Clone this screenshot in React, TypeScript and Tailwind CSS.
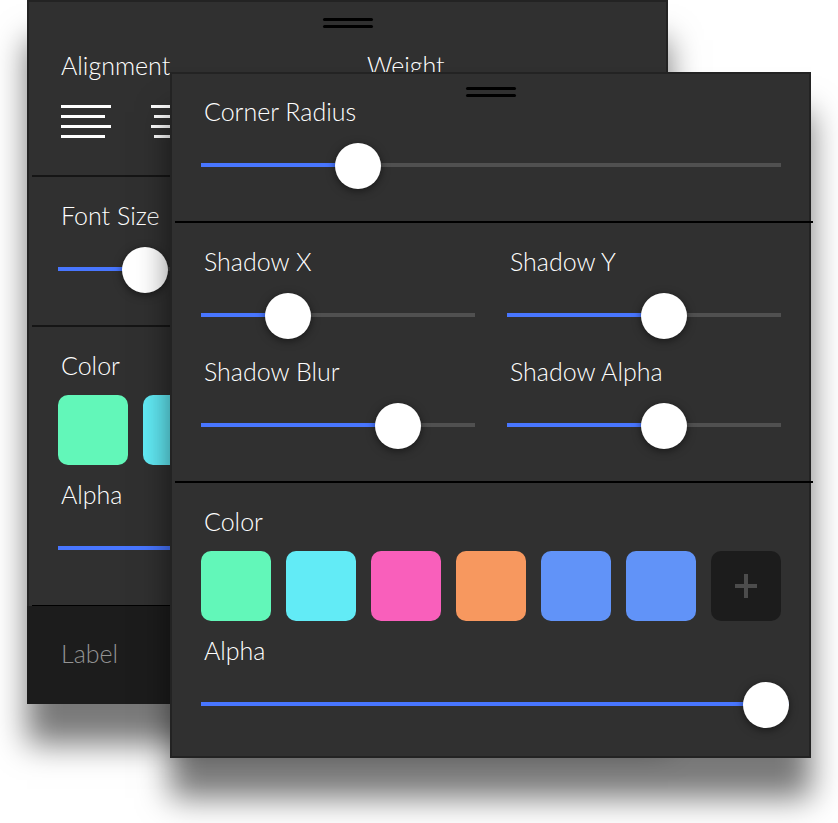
import { useId, useState } from "react";
import type { CSSProperties, ReactNode } from "react";

const label = "block pb-[2px] pl-[3px] text-[25px] leading-[26px] font-light text-white";

function Handle() {
  return (
    <div className="mx-auto flex w-[50px] flex-col gap-1">
      <div className="h-[3px] rounded-full bg-black" />
      <div className="h-[3px] rounded-full bg-black" />
    </div>
  );
}

function Divider({ className }: { className: string }) {
  return <hr className={`ml-[3px] border-0 ${className}`} />;
}

function Slider({ name, initial, wide = false }: { name: string; initial: number; wide?: boolean }) {
  const id = useId();
  const [value, setValue] = useState(initial);
  const blue = "#4876ff";
  const grey = "#505050";
  return (
    <div className={wide ? "-mr-2" : ""}>
      <label htmlFor={id} className={label}>
        {name}
      </label>
      <input
        id={id}
        type="range"
        min={0}
        max={100}
        step="any"
        value={value}
        onChange={(e) => setValue(Number(e.target.value))}
        style={
          {
            "--track": `linear-gradient(to right, ${blue} ${value}%, ${grey} ${value}%)`,
          } as CSSProperties
        }
        className="mt-4 block h-[46px] w-full cursor-pointer appearance-none bg-transparent [&::-webkit-slider-runnable-track]:h-1 [&::-webkit-slider-runnable-track]:bg-(image:--track) [&::-webkit-slider-thumb]:-mt-5 [&::-webkit-slider-thumb]:size-[46px] [&::-webkit-slider-thumb]:appearance-none [&::-webkit-slider-thumb]:rounded-full [&::-webkit-slider-thumb]:bg-white [&::-webkit-slider-thumb]:shadow-[0_2px_8px_rgba(0,0,0,0.5)]"
      />
    </div>
  );
}

const swatches = [
  { name: "Green", color: "bg-[#62f7b9]" },
  { name: "Cyan", color: "bg-[#62ebf6]" },
  { name: "Pink", color: "bg-[#f95fbb]" },
  { name: "Orange", color: "bg-[#f7985f]" },
  { name: "Blue", color: "bg-[#6193f8]" },
  { name: "Blue 2", color: "bg-[#6193f8]" },
];

function ColorSection() {
  return (
    <>
      <h2 className={label}>Color</h2>
      <div className="mt-[15px] mb-4 grid grid-cols-7 gap-[15px]">
        {swatches.map((s) => (
          <button key={s.name} aria-label={s.name} className={`h-[70px] rounded-[10px] ${s.color}`} />
        ))}
        <button
          aria-label="Add color"
          className="flex h-[70px] items-center justify-center rounded-[10px] bg-[#1c1c1c]"
        >
          <svg width="24" height="24" viewBox="0 0 24 24" fill="#4c4c4c">
            <path d="M10 0h4v10h9v4h-9v10h-4V14H1v-4h9z" />
          </svg>
        </button>
      </div>
      <Slider name="Alpha" initial={100} wide />
    </>
  );
}

function AlignButton({ name, x }: { name: string; x: number }) {
  return (
    <button aria-label={name}>
      <svg width="50" height="33" viewBox="0 0 50 33" fill="#fff">
        <rect x="0" y="0" width="50" height="3" />
        <rect x={x} y="10" width="44" height="3" />
        <rect x="0" y="20" width="50" height="3" />
        <rect x={x} y="30" width="44" height="3" />
      </svg>
    </button>
  );
}

function Panel({ className, children }: { className: string; children: ReactNode }) {
  return (
    <section
      className={`col-start-1 row-start-1 self-start border-2 border-[#232323] bg-[#303030] shadow-[0_40px_30px_rgba(0,0,0,0.53)] ${className}`}
    >
      {children}
    </section>
  );
}

export default function App() {
  return (
    <main className="grid min-h-screen overflow-hidden bg-white font-['Lato',sans-serif]">
      <Panel className="mr-[170px] ml-[27px] border-b-0 pt-4">
        <Handle />
        <div className="grid grid-cols-2 gap-x-8 pt-6 pr-7 pb-[33px] pl-[29px]">
          <div>
            <h2 className={label}>Alignment</h2>
            <div className="mt-[25px] flex gap-10 pl-[3px]">
              <AlignButton name="Align left" x={0} />
              <AlignButton name="Align center" x={3} />
              <AlignButton name="Align right" x={6} />
            </div>
          </div>
          <Slider name="Weight" initial={50} />
        </div>
        <Divider className="h-[2px] bg-[#151515]" />
        <div className="grid grid-cols-2 gap-x-8 pt-[25px] pr-7 pb-[33px] pl-[29px]">
          <Slider name="Font Size" initial={28} />
        </div>
        <Divider className="h-[2px] bg-[#151515]" />
        <div className="pt-[25px] pr-7 pb-[34px] pl-[29px]">
          <ColorSection />
        </div>
        <Divider className="h-px bg-black" />
        <footer className="-mx-[2px] bg-[#1c1c1c] pt-[34px] pb-9 pl-[31px]">
          <p className="pb-[2px] pl-[3px] text-[25px] leading-[26px] font-light text-[#939393]">Label</p>
        </footer>
      </Panel>

      <Panel className="z-10 mt-[72px] mr-[27px] ml-[170px] pt-[13px]">
        <Handle />
        <div className="pt-px pr-7 pb-[33px] pl-[29px]">
          <Slider name="Corner Radius" initial={25} />
        </div>
        <Divider className="-mr-1 h-[2px] bg-black" />
        <div className="grid grid-cols-2 gap-x-8 gap-y-5 pt-[25px] pr-7 pb-[33px] pl-[29px]">
          <Slider name="Shadow X" initial={28} />
          <Slider name="Shadow Y" initial={58.6} />
          <Slider name="Shadow Blur" initial={76.4} />
          <Slider name="Shadow Alpha" initial={58.6} />
        </div>
        <Divider className="-mr-1 h-[2px] bg-black" />
        <div className="pt-[25px] pr-7 pb-[29px] pl-[29px]">
          <ColorSection />
        </div>
      </Panel>
    </main>
  );
}
